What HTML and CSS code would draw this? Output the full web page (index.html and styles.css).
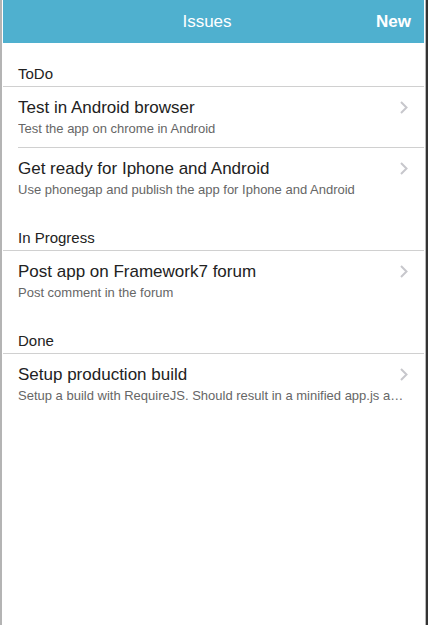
FILE: index.html
```html
<!DOCTYPE html>
<html lang="en">
<head>
    <meta charset="UTF-8">
    <meta name="viewport" content="width=device-width, initial-scale=1.0">
    <title>Issues</title>
    <link rel="stylesheet" href="styles.css">
</head>
<body>
    <div class="outer">
        <div class="frame">
            <div class="screen">
                <div class="navbar">
                    <div class="nav-side"></div>
                    <div class="nav-title">Issues</div>
                    <div class="nav-side nav-right"><a class="nav-link">New</a></div>
                </div>

                <div class="section-title first">ToDo</div>
                <ul class="list">
                    <li class="item">
                        <div class="item-inner">
                            <div class="item-row">
                                <div class="item-title">Test in Android browser</div>
                                <div class="chevron"><svg width="8" height="13" viewBox="0 0 8 13"><path d="M1 1l5.5 5.5L1 12" fill="none" stroke="#c7c7cc" stroke-width="2"/></svg></div>
                            </div>
                            <div class="item-subtitle">Test the app on chrome in Android</div>
                        </div>
                    </li>
                    <li class="item">
                        <div class="item-inner">
                            <div class="item-row">
                                <div class="item-title">Get ready for Iphone and Android</div>
                                <div class="chevron"><svg width="8" height="13" viewBox="0 0 8 13"><path d="M1 1l5.5 5.5L1 12" fill="none" stroke="#c7c7cc" stroke-width="2"/></svg></div>
                            </div>
                            <div class="item-subtitle">Use phonegap and publish the app for Iphone and Android</div>
                        </div>
                    </li>
                </ul>

                <div class="section-title">In Progress</div>
                <ul class="list">
                    <li class="item">
                        <div class="item-inner">
                            <div class="item-row">
                                <div class="item-title">Post app on Framework7 forum</div>
                                <div class="chevron"><svg width="8" height="13" viewBox="0 0 8 13"><path d="M1 1l5.5 5.5L1 12" fill="none" stroke="#c7c7cc" stroke-width="2"/></svg></div>
                            </div>
                            <div class="item-subtitle">Post comment in the forum</div>
                        </div>
                    </li>
                </ul>

                <div class="section-title">Done</div>
                <ul class="list">
                    <li class="item">
                        <div class="item-inner">
                            <div class="item-row">
                                <div class="item-title">Setup production build</div>
                                <div class="chevron"><svg width="8" height="13" viewBox="0 0 8 13"><path d="M1 1l5.5 5.5L1 12" fill="none" stroke="#c7c7cc" stroke-width="2"/></svg></div>
                            </div>
                            <div class="item-subtitle">Setup a build with RequireJS. Should result in a minified app.js and css file</div>
                        </div>
                    </li>
                </ul>
            </div>
        </div>
    </div>
</body>
</html>
```

FILE: styles.css
```css
html, body {
    margin: 0;
    padding: 0;
    background: #fff;
}
body {
    font-family: "Liberation Sans", Arial, sans-serif;
    color: #222;
}
.outer {
    height: 625px;
    border-right: 2px solid #333;
    box-sizing: border-box;
}
.frame {
    height: 100%;
    box-sizing: border-box;
    border-left: 2px solid #b4b4b4;
    padding-left: 1px;
    border-right: 1px solid #b8b8b8;
    padding-right: 1px;
}
.screen {
    height: 100%;
    background: #fff;
}
.navbar {
    display: flex;
    align-items: center;
    height: 43px;
    background: #4fb0cf;
    color: #fff;
    font-size: 17px;
}
.nav-side {
    flex: 1;
}
.nav-title {
    flex: none;
}
.nav-right {
    text-align: right;
    padding-right: 13px;
}
.nav-link {
    font-weight: bold;
}
.section-title {
    padding: 20px 15px 3px;
    font-size: 15px;
    line-height: 18px;
    color: #222;
    border-bottom: 1px solid #d0d0d0;
}
.section-title.first {
    padding-top: 22px;
}
.list {
    list-style: none;
    margin: 0;
    padding: 0;
}
.item {
    padding-left: 15px;
}
.item-inner {
    padding: 10px 16px 10px 0;
    border-bottom: 1px solid #d0d0d0;
}
.item:last-child .item-inner {
    border-bottom: none;
    padding-bottom: 11px;
}
.item-row {
    display: flex;
    align-items: center;
}
.item-title {
    flex: 1;
    min-width: 0;
    font-size: 17px;
    line-height: 21px;
    color: #222;
    white-space: nowrap;
    overflow: hidden;
    text-overflow: ellipsis;
}
.item-subtitle {
    margin-top: 2px;
    font-size: 13px;
    line-height: 17px;
    color: #666;
    white-space: nowrap;
    overflow: hidden;
    text-overflow: ellipsis;
}
.chevron {
    flex: none;
    width: 8px;
    margin-left: 20px;
}
.chevron svg {
    display: block;
}
```
